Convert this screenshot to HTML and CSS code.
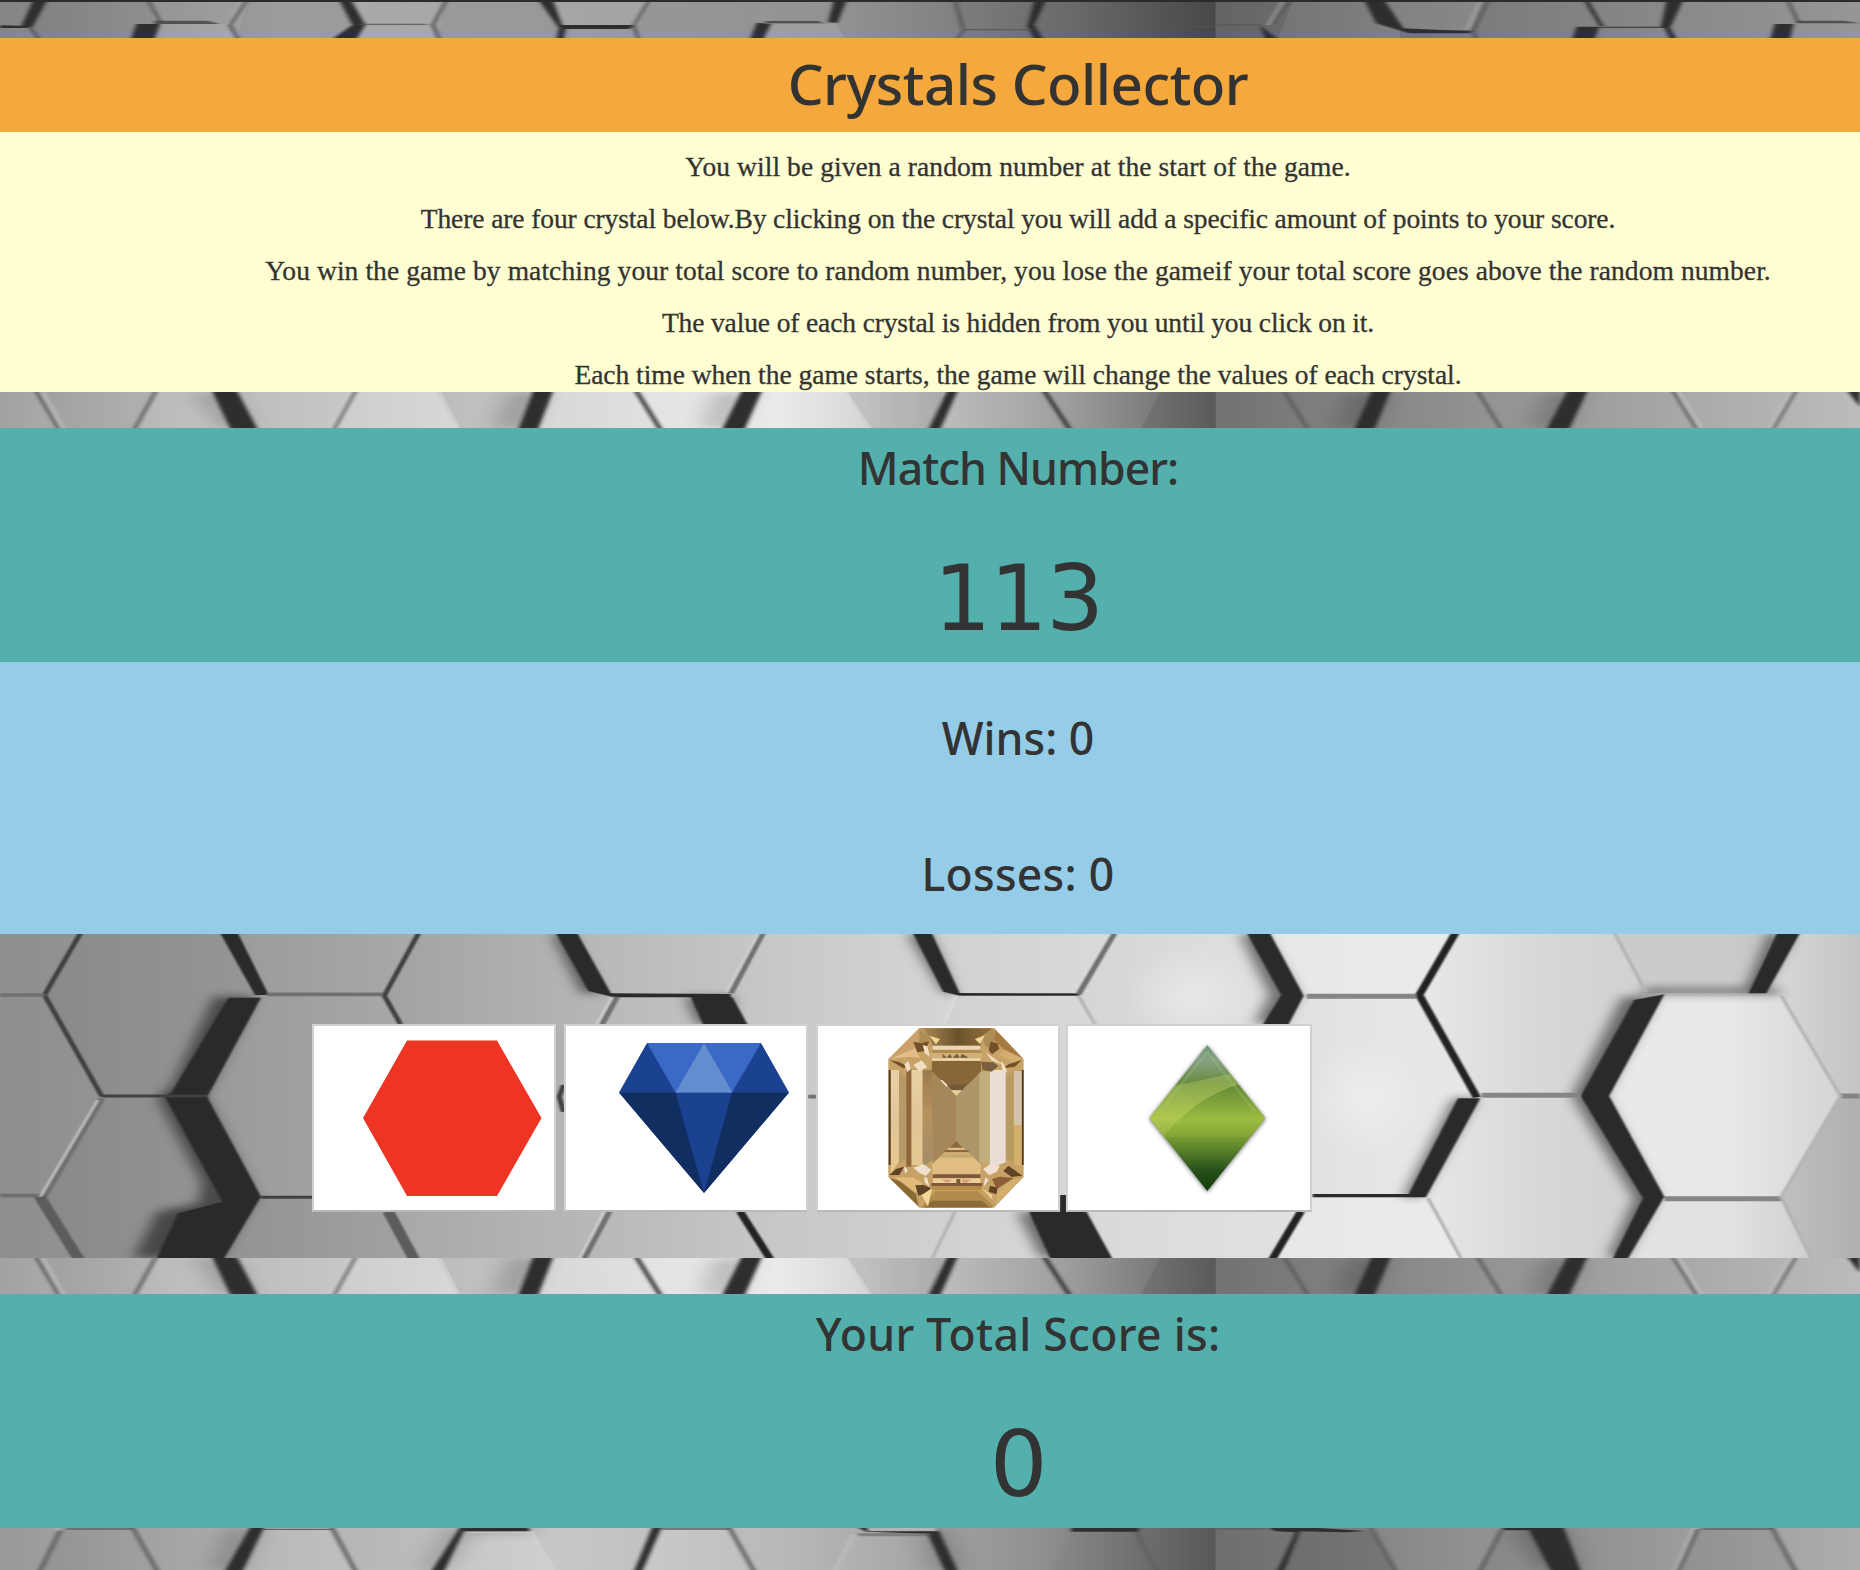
FILE: index.html
```html
<!DOCTYPE html>
<html lang="en">
<head>
<meta charset="utf-8">
<title>Crystals Collector</title>
<link rel="stylesheet" href="styles.css">
</head>
<body>
<svg class="defs" aria-hidden="true">
  <defs>
    <linearGradient id="stripTop"><stop offset="0" stop-color="#858585"/><stop offset=".15" stop-color="#a2a2a2"/><stop offset=".3" stop-color="#9c9c9c"/><stop offset=".45" stop-color="#929292"/><stop offset=".58" stop-color="#686868"/><stop offset=".653" stop-color="#484848"/><stop offset=".654" stop-color="#646464"/><stop offset=".8" stop-color="#7c7c7c"/><stop offset="1" stop-color="#969696"/></linearGradient>
    <linearGradient id="stripMid"><stop offset="0" stop-color="#a2a2a2"/><stop offset=".12" stop-color="#c4c4c4"/><stop offset=".25" stop-color="#d8d8d8"/><stop offset=".42" stop-color="#ebebeb"/><stop offset=".5" stop-color="#c0c0c0"/><stop offset=".57" stop-color="#a0a0a0"/><stop offset=".653" stop-color="#646464"/><stop offset=".654" stop-color="#727272"/><stop offset=".8" stop-color="#939393"/><stop offset="1" stop-color="#bcbcbc"/></linearGradient>
    <linearGradient id="stripLow"><stop offset="0" stop-color="#989898"/><stop offset=".14" stop-color="#b8b8b8"/><stop offset=".3" stop-color="#cfcfcf"/><stop offset=".42" stop-color="#bebebe"/><stop offset=".55" stop-color="#929292"/><stop offset=".653" stop-color="#585858"/><stop offset=".654" stop-color="#6e6e6e"/><stop offset=".8" stop-color="#888"/><stop offset="1" stop-color="#adadad"/></linearGradient>
    <linearGradient id="wall"><stop offset="0" stop-color="#8e8e8e"/><stop offset=".12" stop-color="#9a9a9a"/><stop offset=".25" stop-color="#adadad"/><stop offset=".42" stop-color="#c8c8c8"/><stop offset=".62" stop-color="#dcdcdc"/><stop offset=".75" stop-color="#e5e5e5"/><stop offset=".93" stop-color="#e2e2e2"/><stop offset="1" stop-color="#c4c4c4"/></linearGradient>
    <linearGradient id="shadeL"><stop offset="0" stop-color="#000" stop-opacity=".05"/><stop offset="1" stop-color="#fff" stop-opacity=".09"/></linearGradient>
    <linearGradient id="shadeR"><stop offset="0" stop-color="#fff" stop-opacity=".15"/><stop offset="1" stop-color="#000" stop-opacity=".08"/></linearGradient>
    <radialGradient id="glow"><stop offset="0" stop-color="#fff" stop-opacity=".35"/><stop offset="1" stop-color="#fff" stop-opacity="0"/></radialGradient>
    <filter id="soft" x="-5%" y="-5%" width="110%" height="110%"><feGaussianBlur stdDeviation="2"/></filter>
    <filter id="haze" x="-5%" y="-5%" width="110%" height="110%"><feGaussianBlur stdDeviation="12"/></filter>
    <linearGradient id="leaf" x2="0" y2="1"><stop offset="0" stop-color="#6a9e7a"/><stop offset=".1" stop-color="#87a184"/><stop offset=".25" stop-color="#6b8e45"/><stop offset=".5" stop-color="#a0bd42"/><stop offset=".6" stop-color="#86a637"/><stop offset=".72" stop-color="#56802a"/><stop offset=".86" stop-color="#27501a"/><stop offset="1" stop-color="#123b0b"/></linearGradient>
    <linearGradient id="leafDark" x2="0" y2="1"><stop offset="0" stop-color="#55832a"/><stop offset=".7" stop-color="#9bbb3e"/><stop offset="1" stop-color="#86a637"/></linearGradient>
    <linearGradient id="gold" x2="0" y2="1"><stop offset="0" stop-color="#e8d1a6"/><stop offset=".5" stop-color="#e2c597"/><stop offset="1" stop-color="#e6c98f"/></linearGradient>
    <linearGradient id="bronze" x2="0" y2="1"><stop offset="0" stop-color="#9a7a4e"/><stop offset=".45" stop-color="#b8925f"/><stop offset="1" stop-color="#a18c68"/></linearGradient>
    <linearGradient id="topGold"><stop offset="0" stop-color="#ab8b57"/><stop offset=".5" stop-color="#6b522c"/><stop offset="1" stop-color="#93703d"/></linearGradient>

    <symbol id="midStrip" viewBox="0 0 1568 108" preserveAspectRatio="none">
      <rect width="1568" height="108" fill="url(#stripMid)"/>
      <path fill="url(#shadeL)" d="M30 0H130L115 108H48ZM200 0H298L282 108H215ZM372 0H450L435 108H388ZM465 0H537L556 108H450ZM640 0H715L735 108H625Z"/>
      <path fill="#000" opacity=".09" d="M372 0H450L436 108H388ZM715 0H795L785 108H735ZM978 0H1025V108H962Z"/>
      <g filter="url(#haze)" fill="#000" opacity=".25"><path d="M168 0H190L208 108H188ZM432 0H455L440 108H420ZM605 0H630L615 108H595ZM1140 0H1165L1150 108H1128ZM1305 0H1330L1315 108H1292Z"/></g>
      <g filter="url(#soft)">
        <path fill="#2d2d2d" d="M178 -9H199L218 117H195ZM450 -9H467L453 117H436ZM626 -9H643L627 117H608ZM799 -9H808L792 117H782ZM1157 -9H1173L1158 117H1141ZM1322 -9H1339L1322 117H1303ZM1556 -9H1568V45Z"/>
        <path fill="none" stroke="#333" stroke-width="4" d="M537 0 556 108M881 0 901 108"/>
        <path fill="none" stroke="#575757" stroke-width="3" d="M31 0 49 108M131 0 114 108M299 0 282 108M1083 0 1102 108M1246 0 1265 108M1411 0 1430 108M1513 0 1495 108"/>
        <path fill="none" stroke="#bdbdbd" stroke-width="2" d="M370 0 388 108M716 0 734 108"/>
        <path fill="none" stroke="#d6d6d6" stroke-width="1.5" d="M36 0 53 108M296 0 279 108M1415 0 1434 108M1510 0 1492 108"/>
      </g>
    </symbol>
  </defs>
</svg>

<main class="page">
  <svg class="strip strip-top" viewBox="0 0 1568 114" preserveAspectRatio="none">
    <rect width="1568" height="114" fill="url(#stripTop)"/>
    <path fill="url(#shadeL)" d="M38 0H125L130 70L115 114H30L22 80ZM210 0H290L303 72L285 114H200ZM375 0H460L472 80V114H370ZM545 0H640V114H538ZM710 0H805L812 90V114H650ZM1090 0H1150L1180 90V114H1078Z"/>
    <path fill="#fff" opacity=".1" d="M130 72H190L200 114H130ZM293 0H375L362 72H303ZM303 75H362L368 114H303ZM462 0H547L533 78H472ZM1160 0H1250L1240 90H1185ZM645 72H705L712 114H645Z"/>
    <g filter="url(#soft)">
      <path fill="#2f2f2f" d="M28 0H40L27 83 18 78ZM115 72H135L130 120H110ZM286 0H296L308 75 300 120H279L297 75ZM454 0H466L474 75H534L531 87H477L475 120H469L471 84ZM703 0H714L706 69 698 66ZM638 68 650 72 643 120H632ZM872 0H882L872 75 880 120H872L866 78ZM1150 0H1167L1183 85 1215 90 1240 92V100H1188L1160 70ZM1405 0H1419L1408 83 1414 120H1408L1403 83H1348L1344 120H1325L1329 80H1400ZM1496 72H1512L1509 120H1492ZM0 76 25 78V84H0ZM1062 75 1078 120H1067Z"/>
      <path fill="none" stroke="#303030" stroke-width="4" d="M1337 0 1350 78"/>
      <path fill="none" stroke="#555" stroke-width="3" d="M125 0 135 66M208 0 194 75 200 114M376 0 365 74 370 114M303 73H360M547 0 534 75 538 114M25 80 32 114M805 0 812 90 808 114M812 89H870M1088 0 1072 75M1025 75H1065M1255 0 1242 90 1244 114M1507 0 1516 68M985 80H1025"/>
      <path stroke="#aaa" stroke-width="2" fill="none" d="M204 0 191 75M372 0 361 72M543 0 531 75M1082 0 1069 75M1248 0 1237 88"/>
      <path fill="#3a3a3a" opacity=".75" d="M130 62H175L185 72H130ZM645 63H690L694 70H645ZM1514 62H1555L1568 70H1514Z"/>
    </g>
    <rect width="1568" height="6" fill="#2b2b2b"/>
  </svg>

  <header class="title-bar"><h1 class="title">Crystals Collector</h1></header>

  <section class="rules">
    <p class="rule rule-a">You will be given a random number at the start of the game.</p>
    <p class="rule rule-b">There are four crystal below.By clicking on the crystal you will add a specific amount of points to your score.</p>
    <p class="rule rule-c">You win the game by matching your total score to random number, you lose the gameif your total score goes above the random number.</p>
    <p class="rule rule-d">The value of each crystal is hidden from you until you click on it.</p>
    <p class="rule rule-e">Each time when the game starts, the game will change the values of each crystal.</p>
  </section>

  <svg class="strip"><use href="#midStrip" width="1860" height="36"/></svg>

  <section class="panel">
    <h2 class="label label-match">Match Number:</h2>
    <div class="number">113</div>
  </section>

  <section class="tally">
    <h2 class="label label-wins">Wins: 0</h2>
    <h2 class="label label-losses">Losses: 0</h2>
  </section>

  <section class="board">
    <svg class="wall" viewBox="0 27 3136 972" preserveAspectRatio="none">
      <rect y="27" width="3136" height="972" fill="url(#wall)"/>
      <path fill="url(#shadeL)" d="M135 27H385L440 210 350 513H172L75 210ZM172 515H275L380 830 255 999H140L75 815ZM705 27H940L1030 210 940 513H740L648 210ZM1285 27H1568L1618 208 1530 513H1330L1232 210Z"/>
      <path fill="url(#shadeL)" d="M1878 27H2100L2198 210 2100 513H1900L1818 210ZM2203 212H2393L2490 515 2403 812H2203ZM440 817H650L705 999H380Z"/>
      <path fill="url(#shadeR)" d="M2453 27H2723L2773 200 2663 513H2488L2393 210ZM2498 520H2663L2800 815 2730 999H2458L2408 815Z"/>
      <path fill="#fff" opacity=".22" d="M2141 27H2453L2393 208H2198ZM2806 212H3003L3103 513 3003 815H2806L2713 513ZM2190 820H2403L2463 999H2146Z"/>
      <path fill="#000" opacity=".1" d="M2723 27H2990L2948 205H2773ZM3103 515H3136V999H3053L3003 820Z"/>
      <ellipse cx="2010" cy="215" rx="110" ry="160" fill="url(#glow)"/>
      <ellipse cx="2300" cy="520" rx="100" ry="180" fill="url(#glow)"/>
      <g filter="url(#haze)" fill="#000" opacity=".5">
        <path d="M360 215H430L345 513 430 815 370 999H225L265 860 335 835 340 770 265 520 290 480ZM930 27H960L1015 205H980ZM1155 215H1235V297H1175ZM2090 27H2130L2190 210 2160 297H2115L2140 210ZM2735 215H2795L2705 513 2795 815 2740 999H2710L2755 820 2650 513ZM1715 860H1820V999H1755ZM2450 520H2490L2395 815H2365ZM2770 190H3000V208H2770ZM2982 27H3025L2970 205H2940ZM1530 27H1568L1610 205H1590Z"/>
      </g>
      <g filter="url(#soft)">
        <path fill="#2b2b2b" d="M369 17H399L453 210H430ZM385 218H440L350 513 352 525 440 815 375 1009H262L300 865 375 830 278 515 290 500ZM935 17H971L1030 205 1232 207V217H1035L992 198ZM1165 217H1235L1260 297H1185ZM1537 17H1569L1618 204 1820 205V212H1618L1590 200ZM2100 17H2139L2198 212 2173 297H2130L2160 210ZM2458 520H2496L2404 817H2213V807H2375ZM2755 225 2806 208 2713 513 2806 815 2742 1009H2717L2770 820 2665 513ZM2998 17H3037L2978 205H2948ZM1735 860H1832L1878 1009H1773ZM1786 810H1800V862H1786Z"/>
        <path fill="none" stroke="#242424" stroke-width="14" d="M2456 17 2393 210 2490 517M2193 860 2143 1009M1248 860 1301 1009"/>
        <path fill="none" stroke="#414141" stroke-width="9" d="M138 17 75 210 172 515M708 17 648 212 675 297M172 513H350M440 817H530M950 480 943 515 950 560"/>
        <path fill="none" stroke="#707070" stroke-width="11" d="M172 520 75 815M0 210H75M0 812H75M450 208H645M1288 17 1232 205M1040 215 1015 297M1881 17 1818 208M1027 860 982 1009M1362 515H1378"/>
        <path fill="none" stroke="#5c5c5c" stroke-width="20" d="M67 815 135 1009M655 860 700 1009"/>
        <path fill="none" stroke="#858585" stroke-width="15" d="M2203 214H2388M2498 511H2665M2806 821H3003M3103 513H3136"/>
        <path fill="none" stroke="#b3b3b3" stroke-width="6" d="M1818 212 1846 297M2408 820 2463 999M2723 27 2775 200M3003 212 3103 513 3003 815 3053 999M1610 860 1572 999"/>
        <path fill="none" stroke="#dedede" stroke-width="5" d="M165 525 68 815M1032 218 1007 297M1279 27 1226 200M1871 27 1811 205M1612 215 1592 297M1019 860 978 999" opacity=".65"/>
      </g>
    </svg>

    <div class="crystals">
      <button class="crystal" aria-label="Red crystal">
        <svg class="gem" viewBox="314 1026 240 184"><path fill="#ee3423" d="M407 1040.500H497L541.500 1118 497 1196H407L363 1118Z"/></svg>
      </button>
      <button class="crystal" aria-label="Blue crystal">
        <svg class="gem" viewBox="566 1026 240 184">
          <path fill="#1b4290" d="M647 1043H761L789 1092.500 704 1193 619 1092.500Z"/>
          <path fill="#3b69c7" d="M647 1043H761L732 1092.500H675.500Z"/>
          <path fill="#628dcf" d="M704 1043 732.500 1092.500H675.500Z"/>
          <path fill="#102e60" d="M619 1092.500H675.500L704 1193ZM789 1092.500H732L704 1193Z"/>
        </svg>
      </button>
      <button class="crystal" aria-label="Gold crystal">
        <svg class="gem" viewBox="818 1026 240 184">
          <g transform="translate(860 1015) scale(.33333)">
            <path fill="#c7a267" d="M178 39H402L491 132V486L402 578H178L85 486V132Z"/>
            <path fill="url(#gold)" d="M92 165H117V440L92 478ZM154 165H188V450H154Z"/>
            <path fill="#b59a68" d="M117 172 139 188V430L117 446Z"/>
            <path fill="#8f673f" d="M139 160H154V455H139Z"/>
            <path fill="#523b23" d="M86 165H92V450H86ZM485 165H491V450H485Z"/>
            <path fill="url(#bronze)" d="M188 165H219V435L188 455Z"/>
            <path fill="#a68759" d="M215 168 289 242V378L219 448Z"/>
            <path fill="#ad966a" d="M289 242 364 168V448L289 378Z"/>
            <path fill="#c2ad7e" d="M358 170H390V448L358 440Z"/>
            <path fill="#eaddd5" d="M390 165H437V442L415 450H390Z"/>
            <path fill="#b79b60" d="M439 185 460 168V445L439 430Z"/>
            <path fill="#d4c1ae" d="M462 168H485V330H462Z"/>
            <path fill="#d3ae6d" d="M462 330H485V450H462Z"/>
            <path fill="url(#topGold)" d="M185 40H398L365 65 362 92H218L206 63Z"/>
            <path fill="#ad8c56" d="M178 40 208 65 205 85 178 110ZM402 40 365 65 375 90 402 115Z"/>
            <path fill="#cda16e" d="M172 46V82L155 105 90 132Z"/>
            <path fill="#e5bd89" d="M165 100 180 128 145 125 90 132Z"/>
            <path fill="#a67a43" d="M405 43 488 130 430 102 402 75Z"/>
            <path fill="#d4ad70" d="M430 104 487 131 462 145 415 120Z"/>
            <path fill="#ead5b5" d="M218 92H361V104H218Z"/><path fill="#b28b51" d="M216 105H364V114H216Z"/>
            <path fill="#ceb078" d="M212 114H366V130H212Z"/>
            <path fill="#73583a" d="M248 116 260 128 270 117 277 130 291 116 300 129 306 117 327 128H248Z"/>
            <path fill="#eed7aa" d="M216 130H362V137H216Z"/>
            <path fill="#876638" d="M216 138H362L364 168 322 211H258L215 168Z"/>
            <path fill="#fff5df" d="M240 194 247 196 264 212 260 215Z"/>
            <path fill="#705a37" d="M260 209H321L307 226H275Z"/><path fill="#e8cf9d" d="M273 226H305L289 242Z"/>
            <path fill="#725028" d="M160 80 185 85 208 78 195 108 172 112ZM392 80 412 85 418 102 396 118 386 105ZM90 136 115 140 145 154 130 160ZM485 135 445 148 430 160 465 155Z"/>
            <path fill="#76603d" d="M363 140 400 142 415 153 395 170 368 165Z"/>
            <path fill="#f2dfc2" d="M160 150 185 136 202 157 178 168ZM133 148 145 138 153 162 142 171ZM422 137 432 148 442 170 428 168ZM188 90 202 94 210 125 195 115ZM363 94 377 112 430 150 395 136Z"/>
            <path fill="#e0bd82" d="M289 378 364 450 360 478H218L216 448Z"/>
            <path fill="#8a6741" d="M289 378 309 398H268ZM258 405H321L329 412H249Z"/>
            <path fill="#c6aa73" d="M250 415H329L337 428H240Z"/>
            <path fill="#80583a" d="M219 478H361V490H219ZM214 504H367V514H214Z"/>
            <path fill="#ecce98" d="M219 490H361V504H219Z"/>
            <path fill="#d79e79" d="M245 493 275 494 268 502H256ZM305 493 334 494 320 503H308Z"/>
            <path fill="#7d592c" d="M289 492H301V504H289Z"/>
            <path fill="#b78c45" d="M216 514H364V526H216Z"/>
            <path fill="#b08b49" d="M228 529H355L400 572 396 578H184L207 550Z"/>
            <path fill="#896c38" d="M215 557H366L388 577H194Z"/>
            <path fill="#896a35" d="M88 488 120 499 168 538 176 574Z"/>
            <path fill="#e0bb79" d="M102 486 160 488 188 505 168 532 130 505Z"/>
            <path fill="#8d5d35" d="M396 492 420 485 462 489 410 522Z"/>
            <path fill="#d2ae6d" d="M485 490 408 567 409 530 458 492Z"/>
            <path fill="#604324" d="M166 511 190 510 214 520 198 535 175 542ZM390 512 412 518 410 538 386 530ZM88 480 108 462 132 455 118 480ZM430 468 445 452 487 482 455 486Z"/>
            <path fill="#f0e0d2" d="M160 458 190 447 214 465 198 482 178 474ZM369 463 390 448 420 452 410 470 388 481ZM132 454 144 465 135 477ZM192 486 202 490 208 515 194 502ZM376 487 386 495 370 517Z"/>
            <path fill="#f3d895" d="M216 520 204 575 185 540ZM365 520 398 554 396 540ZM240 72 208 62 228 88ZM345 72 375 61 360 87Z"/>
          </g>
        </svg>
      </button>
      <button class="crystal crystal-last" aria-label="Green crystal">
        <svg class="gem gem-leaf" viewBox="1068 1026 242 184">
          <path class="leaf" fill="url(#leaf)" d="M1207.300 1045 1265.500 1118 1207.300 1191 1149.300 1118Z"/>
          <path fill="url(#leafDark)" d="M1238 1084.500 1265 1118 1250 1137H1164Q1193 1099 1238 1084.500Z" opacity=".55"/>
          <path fill="#d4e66a" opacity=".28" d="M1175 1086 1149.500 1118 1164 1136Q1193 1099 1238 1084.500L1230 1074Z"/>
          <path fill="none" stroke="#b7cf8a" stroke-opacity=".25" stroke-width="2" d="M1159 1113 1207 1052 1256 1113"/>
        </svg>
      </button>
    </div>
  </section>

  <svg class="strip"><use href="#midStrip" width="1860" height="36"/></svg>

  <section class="panel">
    <h2 class="label label-score">Your Total Score is:</h2>
    <div class="number">0</div>
  </section>

  <svg class="strip strip-bottom" viewBox="0 39 1568 126" preserveAspectRatio="none">
    <rect y="39" width="1568" height="126" fill="url(#stripLow)"/>
    <path fill="url(#shadeL)" d="M112 39H218L200 165H133ZM280 39H390L372 165H300ZM448 39H555L538 165H468ZM615 39H725L707 165H635ZM790 39H905L887 165H806ZM1156 39H1268L1248 165H1176Z"/>
    <path fill="#000" opacity=".06" d="M52 45H112L132 165H34ZM1095 45H1156L1176 165H1080ZM1430 42H1494L1512 165H1415Z"/>
    <path fill="#000" opacity=".25" filter="url(#haze)" d="M195 39H215L200 165H180ZM380 39H448V54H395L372 165H360ZM1275 39H1315L1330 165H1300ZM780 39H794L808 165H790Z"/>
    <g filter="url(#soft)">
      <path fill="#2d2d2d" d="M211 35H223L204 172H189ZM388 35H448V49H391L374 172H363ZM550 35H558L541 172H534ZM722 35H732V49H790V35L808 172H797L782 56 730 50ZM903 35H960V50H903ZM1068 35H1095L1150 48 1135 52 1096 49 1082 172H1076L1092 52 1075 49ZM1265 35H1318L1333 172H1308L1289 46H1268Z"/>
      <path fill="none" stroke="#606060" stroke-width="4" d="M51 44 34 165M112 39 132 165M280 39 299 165M615 39 635 165M958 52 975 165M1156 39 1176 165M1266 44 1248 165M1494 39 1513 165M1431 42 1415 165M222 43H280M55 42H112M558 42H615M1435 42H1494M1025 42H1068"/>
      <path fill="none" stroke="#cfcfcf" stroke-width="2" d="M48 39 50 48M447 39 467 165M396 52H448M1428 39 1412 165M720 58 704 165" opacity=".75"/>
      <path fill="#666" opacity=".6" d="M723 54H784V64H723Z"/><path fill="#b5b5b5" d="M733 35H789V47H733Z"/>
    </g>
  </svg>
</main>
</body>
</html>
```
FILE: styles.css
```css
* { box-sizing: border-box; }

body {
  margin: 0;
  background: #8e8e8e;
  color: #333;
  font-family: "Noto Sans", sans-serif;
}

.defs { position: absolute; width: 0; height: 0; }

.page { display: flex; flex-direction: column; width: 1860px; height: 1570px; overflow: hidden; }

.strip { display: block; flex: none; width: 1860px; height: 36px; }
.strip-top { height: 38px; }
.strip-bottom { height: 42px; }

h1, h2, p { margin: 0; }

.title-bar, .rules, .panel, .tally {
  flex: none;
  padding-left: 176px;
  text-align: center;
  white-space: nowrap;
}

.title-bar { height: 94px; padding-top: 1px; background: #f5a83c; }
.title { font-size: 56.5px; line-height: 89px; font-weight: 500; letter-spacing: -.5px; }

.rules {
  display: flex;
  flex-direction: column;
  gap: 18px;
  height: 260px;
  padding-top: 18px;
  background: #fffed3;
}
.rule { font: 27.5px/34px "Liberation Serif", serif; letter-spacing: .08px; -webkit-text-stroke: .3px #333; }
.rule-b { letter-spacing: -.1px; }
.rule-d { letter-spacing: -.13px; }
.rule-e { letter-spacing: -.02px; }

.panel { height: 234px; padding-top: 1px; background: #54b0ac; }
.label { font-size: 44.5px; line-height: 77px; font-weight: 500; }
.label-match { letter-spacing: -1px; }
.label-losses { letter-spacing: .25px; }
.label-score { letter-spacing: .3px; }
.number {
  margin-top: 36px;
  font: 91px/114px "DejaVu Sans", sans-serif;
  letter-spacing: -1.5px;
}

.tally {
  display: flex;
  flex-direction: column;
  gap: 59px;
  height: 272px;
  padding-top: 37px;
  background: #95cce8;
}

.board { display: grid; flex: none; height: 324px; }
.wall { grid-area: 1 / 1; display: block; width: 1860px; height: 324px; }

.crystals {
  grid-area: 1 / 1;
  z-index: 1;
  display: flex;
  gap: 8px;
  align-items: flex-start;
  padding: 90px 0 0 312px;
}
.crystal {
  width: 244px;
  height: 188px;
  padding: 0;
  border: 2px solid #d1d1d1;
  border-bottom-color: #b9b9b9;
  background: #fff;
}
.crystal-last { width: 246px; margin-left: -2px; }
.gem { display: block; width: 100%; height: 184px; }
.leaf { filter: drop-shadow(0 1px 2px rgba(0, 0, 0, .6)); }
```
